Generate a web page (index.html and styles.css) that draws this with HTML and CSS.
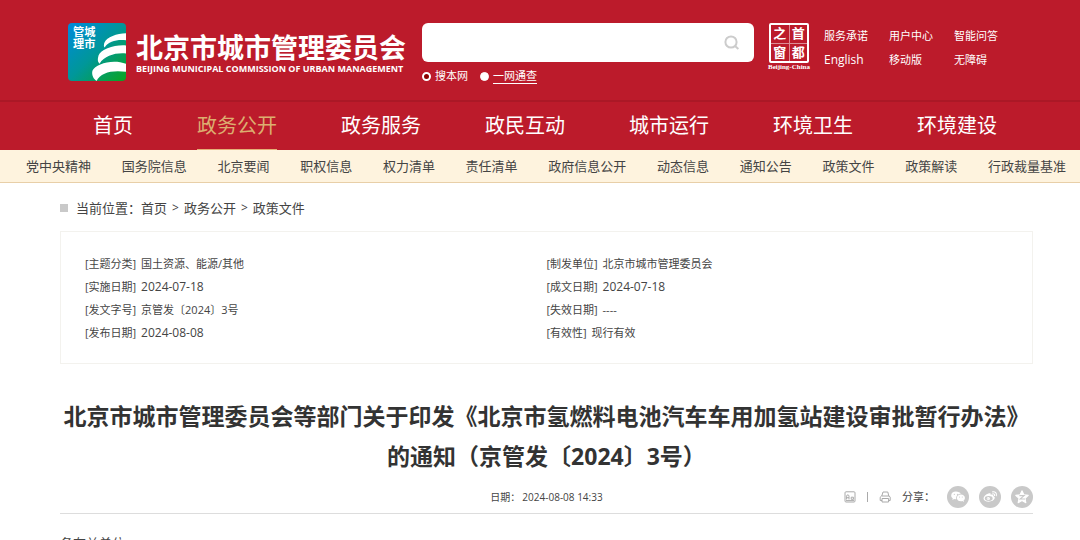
FILE: index.html
```html
<!DOCTYPE html>
<html lang="zh-CN">
<head>
<meta charset="utf-8">
<meta name="viewport" content="width=device-width, initial-scale=1">
<title>北京市城市管理委员会</title>
<link rel="stylesheet" href="styles.css">
</head>
<body>
<header class="site-header">
  <div class="masthead">
    <a class="brand" href="#">
      <svg class="brand-mark" viewBox="0 0 57 57" aria-hidden="true">
        <defs>
          <linearGradient id="mark" x1="0" y1="0" x2="1" y2="1">
            <stop offset="0" stop-color="#0089dc"/>
            <stop offset=".5" stop-color="#009799"/>
            <stop offset="1" stop-color="#0aa51f"/>
          </linearGradient>
          <clipPath id="markClip"><rect width="57" height="57" rx="4"/></clipPath>
        </defs>
        <g clip-path="url(#markClip)">
          <rect width="57" height="57" fill="url(#mark)"/>
          <path fill="#fff" d="M57 10C48 10 38 14 36 19C35 21 35 23 36 24C40 18 48 16 57 17Z"/>
          <path fill="#fff" d="M57 22C46 21 32 26 30 32C29 36 29 38 31 40C36 32 47 29 57 30Z"/>
          <path fill="#fff" d="M57 40C44 35 27 40 24 47C23 51 25 55 28 57C32 49 43 46 57 48Z"/>
        </g>
        <text class="brand-mark-text" x="5" y="13">管城</text>
        <text class="brand-mark-text" x="5" y="25">理市</text>
      </svg>
      <span class="brand-names">
        <span class="brand-zh">北京市城市管理委员会</span>
        <span class="brand-en">BEIJING MUNICIPAL COMMISSION OF URBAN MANAGEMENT</span>
      </span>
    </a>
    <form class="search">
      <div class="search-box">
        <input class="search-input" type="text" aria-label="搜索">
        <button class="search-button" type="button" aria-label="搜索">
          <svg class="search-icon" viewBox="0 0 16 16" aria-hidden="true"><circle cx="7" cy="7" r="5.6"/><path d="M11 11l3.400 3"/></svg>
        </button>
      </div>
      <div class="search-scope">
        <label class="scope"><input class="scope-radio" type="radio" name="scope" checked>搜本网</label>
        <label class="scope"><input class="scope-radio" type="radio" name="scope"><span class="scope-all">一网通查</span></label>
      </div>
    </form>
    <a class="capital" href="#">
      <span class="seal"><span class="seal-cell">之</span><span class="seal-cell">首</span><span class="seal-cell">窗</span><span class="seal-cell">都</span></span>
      <span class="capital-en">Beijing-China</span>
    </a>
    <nav class="tools" aria-label="服务">
      <a href="#">服务承诺</a><a href="#">用户中心</a><a href="#">智能问答</a>
      <a class="latin" href="#">English</a><a href="#">移动版</a><a href="#">无障碍</a>
    </nav>
  </div>
  <nav class="main-nav" aria-label="主导航">
    <a href="#">首页</a>
    <a class="current" href="#">政务公开</a>
    <a href="#">政务服务</a>
    <a href="#">政民互动</a>
    <a href="#">城市运行</a>
    <a href="#">环境卫生</a>
    <a href="#">环境建设</a>
  </nav>
</header>
<nav class="sub-nav" aria-label="政务公开">
  <a href="#">党中央精神</a><a href="#">国务院信息</a><a href="#">北京要闻</a><a href="#">职权信息</a><a href="#">权力清单</a><a href="#">责任清单</a><a href="#">政府信息公开</a><a href="#">动态信息</a><a href="#">通知公告</a><a href="#">政策文件</a><a href="#">政策解读</a><a href="#">行政裁量基准</a>
</nav>
<main class="page">
  <nav class="crumbs" aria-label="当前位置">
    <span class="crumb-label">当前位置：</span><a href="#">首页</a><span class="crumb-sep">&gt;</span><a href="#">政务公开</a><span class="crumb-sep">&gt;</span><a href="#">政策文件</a>
  </nav>
  <ul class="facts">
    <li>[主题分类] <span class="fact">国土资源、能源/其他</span></li>
    <li>[制发单位] <span class="fact">北京市城市管理委员会</span></li>
    <li>[实施日期] <span class="fact latin">2024-07-18</span></li>
    <li>[成文日期] <span class="fact latin">2024-07-18</span></li>
    <li>[发文字号] <span class="fact">京管发〔2024〕3号</span></li>
    <li>[失效日期] <span class="fact">----</span></li>
    <li>[发布日期] <span class="fact latin">2024-08-08</span></li>
    <li>[有效性] <span class="fact">现行有效</span></li>
  </ul>
  <article>
    <h1 class="title">北京市城市管理委员会等部门关于印发《北京市氢燃料电池汽车车用加氢站建设审批暂行办法》<br>的通知（京管发〔2024〕3号）</h1>
    <div class="meta">
      <p class="date"><span>日期：</span><time datetime="2024-08-08T14:33">2024-08-08 14:33</time></p>
      <div class="actions">
        <button class="tool-button" type="button" aria-label="字号">
          <svg viewBox="0 0 12 12" aria-hidden="true"><rect x="1" y=".8" width="10" height="10.2" rx="1"/><path d="M2.600 8.500V5.200q0-1.300 1.200-1.300T5 5.200v3.300M2.600 6.700H5M9.400 8.500V6.200H7.200v2.100h2.200M2 9.600h8"/></svg>
        </button>
        <span class="divider"></span>
        <button class="tool-button" type="button" aria-label="打印">
          <svg viewBox="0 0 12 12" aria-hidden="true"><path d="M2.800 5l1.200-4h4.800l1 4M3 9.500H1.200V6.200L2.400 5h7.800l1 1.200v3.300H9.600M3 7.500h6.600V11H3z"/></svg>
        </button>
        <span class="share-label">分享：</span>
        <div class="share">
          <a class="share-link" href="#" aria-label="微信">
            <svg viewBox="0 0 21 21" aria-hidden="true"><circle cx="10.500" cy="10.500" r="10.500" fill="#c9c9c9"/><path fill="#fff" d="M8.500 5.300c-2.600 0-4.500 1.600-4.500 3.700 0 1.200.6 2.100 1.500 2.800l-.4 1.500 1.700-.9c.8.200 1.400.300 2.100.2-.7-3 1.600-5.100 4.300-5.100-.6-1.300-2.500-2.200-4.700-2.200z"/><path fill="#fff" d="M13.300 8.200c-2.200 0-3.900 1.400-3.900 3.200s1.700 3.200 3.900 3.200c.5 0 1-.1 1.400-.2l1.500.8-.4-1.300c.8-.6 1.300-1.500 1.300-2.500 0-1.800-1.700-3.200-3.800-3.200z"/><g fill="#c9c9c9"><circle cx="7" cy="7.900" r=".6"/><circle cx="10" cy="7.900" r=".6"/><circle cx="12" cy="10.500" r=".5"/><circle cx="14.600" cy="10.500" r=".5"/></g></svg>
          </a>
          <a class="share-link" href="#" aria-label="微博">
            <svg viewBox="0 0 21 21" aria-hidden="true"><circle cx="10.500" cy="10.500" r="10.500" fill="#c9c9c9"/><path fill="#fff" d="M9 7.200c1.300-.7 2.400-.4 2.100 1.100 1.700-.6 3-.1 2.500 1.300 1.200.4 1.700 1.200 1.400 2.200-.5 1.900-2.900 3.200-5.800 3.200-2.800 0-4.900-1.300-4.900-3.100 0-1.700 2.300-3.900 4.700-4.700z"/><ellipse cx="9.300" cy="11.900" rx="3.700" ry="2.300" fill="#c9c9c9"/><circle cx="8.900" cy="12" r="1.500" fill="#fff"/><circle cx="8.500" cy="12.300" r=".5" fill="#c9c9c9"/><path fill="none" stroke="#fff" stroke-linecap="round" d="M13 5.600c2.500-.5 4.200 1.300 3.500 3.700M13.100 7.400c1.200-.2 2 .600 1.700 1.700"/></svg>
          </a>
          <a class="share-link" href="#" aria-label="QQ空间">
            <svg viewBox="0 0 21 21" aria-hidden="true"><circle cx="10.500" cy="10.500" r="10.500" fill="#c9c9c9"/><path fill="#fff" stroke="#fff" stroke-linejoin="round" d="M10.500 4.500l1.800 3.900 4.200.5-3.100 2.900.8 4.200-3.700-2.100L6.800 16l.8-4.200-3.100-2.900 4.200-.5z"/><path fill="none" stroke="#c9c9c9" d="M8 9.200h4.600l-3.900 3.200h4.700"/></svg>
          </a>
        </div>
      </div>
    </div>
    <p class="body-text">各有关单位：</p>
  </article>
</main>
</body>
</html>
```
FILE: styles.css
```css
* { box-sizing: border-box; }
body {
  margin: 0;
  background: #fff;
  color: #444;
  font-family: "Open Sans", "Noto Sans CJK SC", sans-serif;
  font-size: 13px;
  line-height: 20px;
}
a { color: inherit; text-decoration: none; }
p, h1, ul { margin: 0; padding: 0; }
button { border: 0; padding: 0; background: none; }
.latin { font-size: 12px; }

.site-header { background: #bc1b2b; color: #fff; }
.masthead {
  display: flex;
  align-items: flex-start;
  height: 102px;
  padding: 23px 82px 0 68px;
  border-bottom: 2px solid #ab1826;
}
.brand { display: flex; gap: 10px; }
.brand-mark { width: 58px; height: 58px; }
.brand-mark-text { fill: #fff; font-size: 11px; font-weight: 700; }
.brand-names { display: flex; flex-direction: column; padding-top: 10px; white-space: nowrap; }
.brand-zh { font-size: 27px; font-weight: 700; line-height: 30px; }
.brand-en { font-family: "Open Sans", sans-serif; font-size: 9px; font-weight: 700; line-height: 12px; }

.search { flex: 1; margin-left: 16px; }
.search-box {
  display: flex;
  align-items: center;
  height: 39px;
  padding-right: 14px;
  border-radius: 6px;
  background: #fff;
}
.search-input { flex: 1; min-width: 0; height: 100%; padding: 0 12px; border: 0; background: none; font: inherit; }
.search-button { display: flex; }
.search-icon { width: 16px; height: 16px; fill: none; stroke: #ccc; stroke-width: 2; }
.search-scope { display: flex; gap: 12px; padding-top: 4px; font-size: 11px; }
.scope { display: flex; align-items: center; gap: 4px; }
.scope-radio {
  appearance: none;
  width: 9px;
  height: 9px;
  margin: 0;
  border: 1px solid #fff;
  border-radius: 50%;
  background: #fff;
}
.scope-radio:checked { border-width: 2px; background: #8b0000; }
.scope-all { border-bottom: 1px solid #fff; line-height: 14px; }

.capital { display: flex; flex-direction: column; align-items: center; width: 44px; margin-left: 13px; }
.seal {
  display: grid;
  grid-template-columns: 1fr 1fr;
  gap: 1px;
  width: 40px;
  height: 40px;
  border: 2px solid #fff;
  border-radius: 2px;
  background: #dd8d95;
  font-size: 13px;
  font-weight: 700;
  line-height: 17px;
  text-align: center;
}
.seal-cell { background: #bc1b2b; }
.capital-en { font-family: "Liberation Serif", serif; font-size: 7px; font-weight: 700; line-height: 8px; }
.tools {
  display: grid;
  grid-template-columns: repeat(3, auto);
  column-gap: 21px;
  row-gap: 4px;
  margin-left: 13px;
  padding-top: 3px;
  font-size: 11px;
}
.main-nav {
  display: flex;
  gap: 64px;
  padding: 0 83px 0 93px;
  font-size: 20px;
  line-height: 47px;
  white-space: nowrap;
}
.main-nav a { border-bottom: 1px solid transparent; }
.main-nav .current { border-color: #e5b178; color: #dcae70; }

.sub-nav {
  display: flex;
  justify-content: space-between;
  padding: 0 14px 0 26px;
  border-bottom: 1px solid #e8cfa8;
  background: #fef3de;
  line-height: 32px;
  white-space: nowrap;
}
.page { padding: 0 47px 0 60px; }
.crumbs { display: flex; align-items: center; padding: 15px 0 13px; }
.crumbs::before { content: ""; width: 8px; height: 8px; margin-right: 8px; background: #c9c9c9; }
.crumb-sep { margin: 0 5px; font-size: 12px; }

.facts {
  display: grid;
  grid-template-columns: 1fr 1fr;
  padding: 20px 24px 19px;
  border: 1px solid #f3f2ee;
  list-style: none;
  font-size: 11px;
  line-height: 23px;
}
.fact { margin-left: 2px; }
.title {
  margin-top: 32px;
  color: #333;
  font-size: 23px;
  font-weight: 700;
  line-height: 40px;
  text-align: center;
}
.meta {
  display: grid;
  grid-template-columns: 1fr auto 1fr;
  align-items: center;
  margin-top: 10px;
  padding-bottom: 5px;
  border-bottom: 1px solid #ddd;
}
.date { display: flex; grid-column: 2; gap: 2px; font-size: 10px; }
.actions { display: flex; align-items: center; justify-content: flex-end; font-size: 11px; }
.tool-button { width: 12px; height: 12px; }
.tool-button svg { display: block; fill: none; stroke: #aaa; stroke-width: 1; }
.divider { width: 1px; height: 10px; margin: 0 11px; background: #aaa; }
.share-label { margin-left: 11px; }
.share { display: flex; gap: 10px; margin-left: 12px; }
.share-link { display: flex; width: 22px; height: 22px; }
.body-text { padding-top: 16px; line-height: 26px; }
```
